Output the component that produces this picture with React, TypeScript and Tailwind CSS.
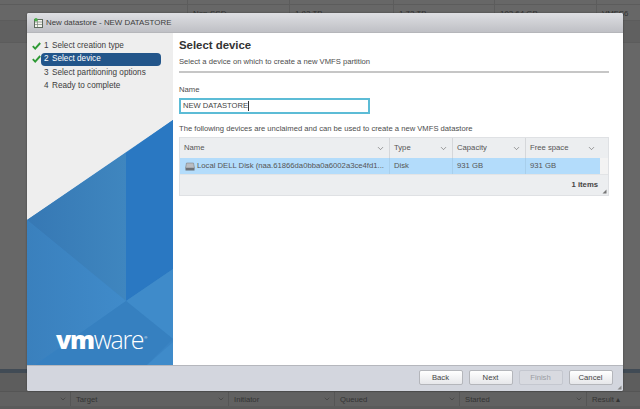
import React from 'react';
import { ChevronDown } from 'lucide-react';

const steps = [
  { num: '1', label: 'Select creation type', done: true },
  { num: '2', label: 'Select device', done: true, active: true },
  { num: '3', label: 'Select partitioning options' },
  { num: '4', label: 'Ready to complete' },
];

const columns = [
  { name: 'Name', cls: 'w-[210px] border-r' },
  { name: 'Type', cls: 'w-[63px] border-r' },
  { name: 'Capacity', cls: 'w-[73px] border-r' },
  { name: 'Free space', cls: 'w-[74px]' },
];

const pageCols = [
  { text: '', cls: 'w-[187px]' },
  { text: 'Non-SSD', cls: 'w-[102px] border-l' },
  { text: '1.82 TB', cls: 'w-[104px] border-l' },
  { text: '1.72 TB', cls: 'w-[101px] border-l' },
  { text: '102.64 GB', cls: 'w-[102px] border-l' },
  { text: 'VMFS6', cls: 'flex-1 border-l' },
];

function Check() {
  return (
    <svg width="9" height="8" viewBox="0 0 9 8" className="shrink-0">
      <path d="M0.8 4.2 L3.2 6.6 L8.2 1" fill="none" stroke="#2f9a35" strokeWidth="1.9" />
    </svg>
  );
}

function WizardArt() {
  // coordinates are panel-relative, 146 x 332
  return (
    <svg width="146" height="332" viewBox="0 0 146 332" className="absolute left-0 top-0">
      <defs>
        <linearGradient id="upper" x1="0" x2="1" y1="0" y2="0">
          <stop offset="0" stopColor="#3678b4" />
          <stop offset="1" stopColor="#3f86bf" />
        </linearGradient>
        <linearGradient id="lower" x1="0" x2="1" y1="0" y2="0">
          <stop offset="0" stopColor="#3a80bd" />
          <stop offset="1" stopColor="#408bca" />
        </linearGradient>
      </defs>
      <polygon points="0,187 146,87 146,332 0,332" fill="#3a84c4" />
      <polygon points="0,187 99,120 99,268" fill="url(#upper)" />
      <polygon points="99,120 146,87 146,236 99,268" fill="#2a78c2" />
      <polygon points="0,187 99,268 8,332 0,332" fill="url(#lower)" />
      <polygon points="99,268 146,236 146,306" fill="#3f8bca" />
      <polygon points="8,332 99,268 146,306 120,332" fill="#3680c0" />
      <polygon points="120,332 146,309 146,332" fill="#3f8bca" />
    </svg>
  );
}

function WizardButton({ label, disabled }: { label: string; disabled?: boolean }) {
  return (
    <button
      className={`h-[15px] w-[44px] rounded-[2px] border text-[7.7px] leading-none ${
        disabled
          ? 'border-[#c4c7cf] bg-[#d8dae0] text-[#9a9da3]'
          : 'border-[#b4b6bb] bg-gradient-to-b from-white to-[#e6e7ea] text-[#444]'
      }`}
    >
      {label}
    </button>
  );
}

export default function App() {
  return (
    <div className="relative flex h-[409px] w-[640px] flex-col overflow-hidden bg-[#676767] font-['Liberation_Sans',Arial,sans-serif] text-[#444]">
      {/* dimmed page behind the dialog */}
      <div className="flex h-[5px] border-b border-[#5c5c5c]">
        {pageCols.map((c, i) => (
          <div key={i} className={`${c.cls} border-[#5c5c5c]`} />
        ))}
      </div>
      <div className="flex h-[16px] border-b border-[#5c5c5c] text-[7.9px] text-[#333]">
        {pageCols.map((c, i) => (
          <div key={i} className={`${c.cls} border-[#5c5c5c] pl-[5px] pt-[3px]`}>
            {c.text}
          </div>
        ))}
      </div>
      <div className="h-[22px] border-b border-[#5c5c5c] bg-[#606060]" />
      <div className="flex-1" />
      <div className="h-[4px] bg-[#414b55]" />
      <div className="h-[18px] bg-[#5d5d5d]" />
      <div className="flex h-[15px] border-t border-[#555] bg-[#616161] text-[7.7px] leading-[15px] text-[#333]">
        {[
          ['', 'w-[71px]'],
          ['Target', 'w-[158px]'],
          ['Initiator', 'w-[106px]'],
          ['Queued', 'w-[125px]'],
          ['Started', 'w-[127px]'],
        ].map(([name, cls]) => (
          <div key={name} className={`${cls} flex items-center justify-between border-r border-[#555] pl-[5px] pr-[3px]`}>
            <span>{name}</span>
            <ChevronDown size={8} strokeWidth={1.5} />
          </div>
        ))}
        <div className="pl-[5px]">Result ▴</div>
      </div>
      <div className="h-[3px] bg-[#5b5b5b]" />

      {/* dialog */}
      <div className="absolute left-[27px] top-[13px] flex h-[378px] w-[596px] flex-col overflow-hidden rounded-[2px] bg-white shadow-[0_0_2px_rgba(0,0,0,0.4)]">
        <div className="flex h-[20px] shrink-0 items-center gap-[3px] border-b border-[#b5b6ba] bg-gradient-to-b from-[#dedfe3] to-[#bfc0c5] pl-[7px] text-[7.9px] text-[#3c3c3c]">
          <svg width="9" height="10" viewBox="0 0 9 10">
            <rect x="0.5" y="1.5" width="8" height="8" fill="#f4f4ee" stroke="#5e6a5e" />
            <path d="M1 4h7M1 6.5h7M3.5 2v7" stroke="#7b857b" strokeWidth="0.7" />
            <circle cx="2" cy="1.8" r="1.7" fill="#49b04a" />
          </svg>
          <span className="font-medium">New datastore - NEW DATASTORE</span>
        </div>

        <div className="flex min-h-0 flex-1">
          <div className="relative w-[146px] shrink-0 bg-[#eeeeee]">
            <WizardArt />
            <div className="relative flex flex-col pl-[5px] pt-[6px] text-[8.2px]">
              {steps.map((s) => (
                <div key={s.num} className="flex h-[13.5px] items-center">
                  <div className="w-[9px] shrink-0">{s.done && <Check />}</div>
                  <div
                    className={`flex h-[13px] w-[120px] items-center rounded-[4px] pl-[3px] ${
                      s.active ? 'bg-[#22558a] text-white' : 'text-[#3c3c3c]'
                    }`}
                  >
                    <span className="w-[8px] shrink-0">{s.num}</span>
                    <span>{s.label}</span>
                  </div>
                </div>
              ))}
            </div>
            <div className="absolute bottom-[13px] left-[29px] flex items-start text-[25px] leading-none tracking-[-1.3px] text-white">
              <span className="font-['Open_Sans',sans-serif] font-extrabold">vm</span>
              <span className="font-['Open_Sans',sans-serif] font-light">ware</span>
              <span className="ml-[1px] mt-[9px] text-[4px] tracking-normal">®</span>
            </div>
          </div>

          <div className="flex min-w-0 flex-1 flex-col pl-[6px] pr-[14px] pt-[6px]">
            <h2 className="text-[11.4px] font-bold leading-[13px] text-[#333]">Select device</h2>
            <p className="mt-[4px] text-[7.65px] leading-[11px] text-[#4d4d4d]">Select a device on which to create a new VMFS partition</p>
            <div className="mt-[4px] h-[2px] bg-[#c6c6c6]" />

            <label className="mt-[11px] text-[7.7px] leading-[11px] text-[#4d4d4d]">Name</label>
            <div className="mt-[3px] flex h-[16px] w-[191px] items-center border-2 border-[#5cbcd6] pl-[2px] text-[7.6px] text-[#444]">
              NEW DATASTORE<span className="ml-[0.5px] h-[10px] w-px bg-[#333]" />
            </div>
            <p className="mt-[9px] text-[7.65px] leading-[11px] text-[#4d4d4d]">
              The following devices are unclaimed and can be used to create a new VMFS datastore
            </p>

            <div className="mt-[3px] flex h-[59px] flex-col border border-[#dfe1e4] bg-[#eceef0] text-[7.7px] text-[#555]">
              <div className="flex h-[20px] shrink-0">
                {columns.map((c) => (
                  <div key={c.name} className={`${c.cls} flex items-center justify-between border-[#d5d7da] pl-[4px] pr-[4px]`}>
                    <span>{c.name}</span>
                    <ChevronDown size={9} strokeWidth={1.5} />
                  </div>
                ))}
              </div>
              <div className="flex h-[16px] shrink-0">
                <div className="flex w-[420px] bg-[#b3dcfb] leading-[16px]">
                  <div className="flex w-[210px] items-center gap-[2px] border-r border-[#a8cfec] pl-[5px]">
                    <svg width="10" height="9" viewBox="0 0 10 9" className="shrink-0">
                      <path d="M1.5 1h7l1 5H.5z" fill="#b9bdc2" stroke="#777" strokeWidth="0.5" />
                      <rect x="0.5" y="6" width="9" height="2.5" fill="#6d7176" />
                    </svg>
                    <span className="whitespace-nowrap">Local DELL Disk (naa.61866da0bba0a6002a3ce4fd1...</span>
                  </div>
                  <div className="w-[63px] border-r border-[#a8cfec] pl-[4px]">Disk</div>
                  <div className="w-[73px] border-r border-[#a8cfec] pl-[4px]">931 GB</div>
                  <div className="flex-1 pl-[4px]">931 GB</div>
                </div>
                <div className="flex-1 bg-[#f3f3f3]" />
              </div>
              <div className="relative flex flex-1 items-center justify-end border-t border-[#e2e4e6] pr-[10px] font-bold text-[#444]">
                1 items
                <svg width="5" height="5" viewBox="0 0 5 5" className="absolute bottom-[1px] right-[1px]">
                  <path d="M4.5 0.5v4h-4z" fill="#777" />
                </svg>
              </div>
            </div>
          </div>
        </div>

        <div className="relative flex h-[26px] shrink-0 items-start justify-end gap-[6px] border-t border-[#b5b7bd] bg-[#d3d6de] pr-[10.5px] pt-[4px]">
          <WizardButton label="Back" />
          <WizardButton label="Next" />
          <WizardButton label="Finish" disabled />
          <WizardButton label="Cancel" />
          <svg width="5" height="5" viewBox="0 0 5 5" className="absolute bottom-[1px] right-[1px]">
            <path d="M4.5 0.5v4h-4z" fill="#888" />
          </svg>
        </div>
      </div>
    </div>
  );
}
